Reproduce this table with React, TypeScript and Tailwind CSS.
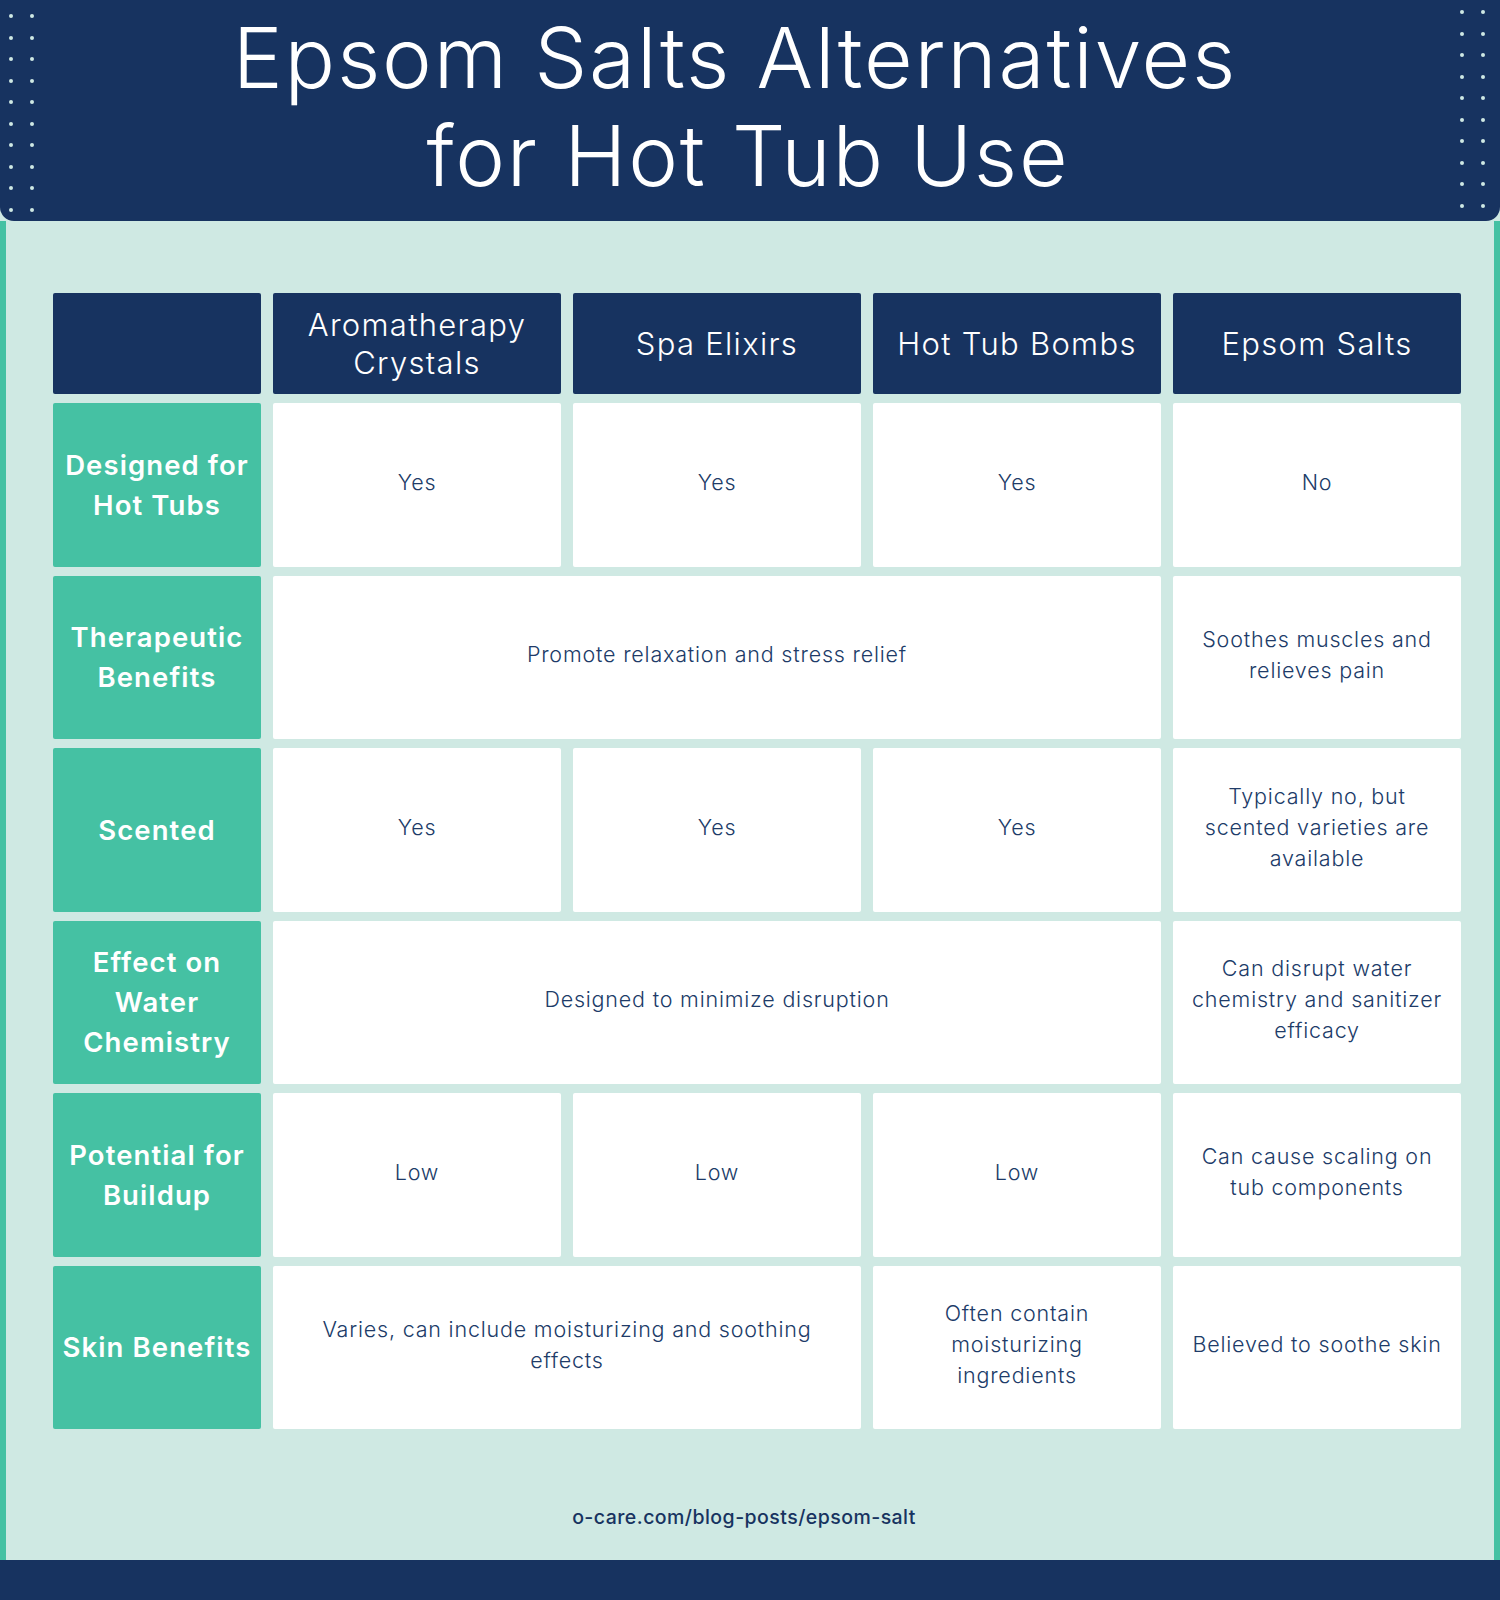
const NAVY = 'bg-[#173360]'

const dotRows = [0, 1, 2, 3, 4, 5, 6, 7, 8, 9]

function Dots({ side }: { side: 'left' | 'right' }) {
  return (
    <div
      className={
        side === 'left'
          ? 'absolute left-[9px] top-[14px] grid grid-cols-[4px_4px] gap-x-[17px] gap-y-[17.5px]'
          : 'absolute right-[15px] top-[10px] grid grid-cols-[4px_4px] gap-x-[17px] gap-y-[17.5px]'
      }
    >
      {dotRows.flatMap((r) => [
        <span key={r + 'a'} className="size-[4px] rounded-full bg-[#cfe9e3]" />,
        <span key={r + 'b'} className="size-[4px] rounded-full bg-[#cfe9e3]" />,
      ])}
    </div>
  )
}

function Head({ children }: { children?: React.ReactNode }) {
  return (
    <div className={`flex items-center justify-center rounded-[2px] ${NAVY} px-2 text-center text-[31px] font-light leading-[38px] tracking-[1.3px] text-white`}>
      {children}
    </div>
  )
}

function Label({ children }: { children: React.ReactNode }) {
  return (
    <div className="flex items-center justify-center rounded-[2px] bg-[#45c1a3] px-1 text-center text-[27.5px] font-semibold leading-[40px] tracking-[1.1px] text-white">
      {children}
    </div>
  )
}

function Cell({ children, span }: { children: React.ReactNode; span?: string }) {
  return (
    <div
      className={`flex items-center justify-center rounded-[2px] bg-white px-2 pb-[5px] text-center text-[21.5px] font-light leading-[31px] tracking-[0.8px] text-[#203b68] ${span ?? ''}`}
    >
      {children}
    </div>
  )
}

export default function App() {
  return (
    <div className="flex h-[1600px] w-[1500px] flex-col bg-[#cfe9e3] font-['Inter',sans-serif]">
      <header className={`relative h-[221px] shrink-0 rounded-b-[14px] ${NAVY}`}>
        <Dots side="left" />
        <Dots side="right" />
        <h1 className="pt-[9px] text-center text-[84px] font-light leading-[98px] tracking-[1.8px] text-white">
          <span className="block pr-[30px]">Epsom Salts Alternatives</span>
          <span className="block pr-[4px]">for Hot Tub Use</span>
        </h1>
      </header>

      <main className="flex flex-1 flex-col border-x-[6px] border-[#45c1a3] px-[47px] pt-[72px]">
        <div className="grid grid-cols-[208px_repeat(4,288px)] grid-rows-[101px_repeat(6,163.5px)] gap-x-[12px] gap-y-[9px]">
          <Head />
          <Head>
            Aromatherapy
            <br />
            Crystals
          </Head>
          <Head>Spa Elixirs</Head>
          <Head>Hot Tub Bombs</Head>
          <Head>Epsom Salts</Head>

          <Label>
            Designed for
            <br />
            Hot Tubs
          </Label>
          <Cell>Yes</Cell>
          <Cell>Yes</Cell>
          <Cell>Yes</Cell>
          <Cell>No</Cell>

          <Label>
            Therapeutic
            <br />
            Benefits
          </Label>
          <Cell span="col-span-3">Promote relaxation and stress relief</Cell>
          <Cell>
            Soothes muscles and
            <br />
            relieves pain
          </Cell>

          <Label>Scented</Label>
          <Cell>Yes</Cell>
          <Cell>Yes</Cell>
          <Cell>Yes</Cell>
          <Cell>
            Typically no, but
            <br />
            scented varieties are
            <br />
            available
          </Cell>

          <Label>
            Effect on
            <br />
            Water
            <br />
            Chemistry
          </Label>
          <Cell span="col-span-3">Designed to minimize disruption</Cell>
          <Cell>
            Can disrupt water
            <br />
            chemistry and sanitizer
            <br />
            efficacy
          </Cell>

          <Label>
            Potential for
            <br />
            Buildup
          </Label>
          <Cell>Low</Cell>
          <Cell>Low</Cell>
          <Cell>Low</Cell>
          <Cell>
            Can cause scaling on
            <br />
            tub components
          </Cell>

          <Label>Skin Benefits</Label>
          <Cell span="col-span-2">
            Varies, can include moisturizing and soothing
            <br />
            effects
          </Cell>
          <Cell>
            Often contain
            <br />
            moisturizing
            <br />
            ingredients
          </Cell>
          <Cell>Believed to soothe skin</Cell>
        </div>

        <p className="mt-[76px] pr-[12px] text-center text-[19.5px] font-medium leading-[24px] tracking-[0.45px] text-[#173360]">
          o-care.com/blog-posts/epsom-salt
        </p>
      </main>

      <footer className={`h-[40px] shrink-0 ${NAVY}`} />
    </div>
  )
}
